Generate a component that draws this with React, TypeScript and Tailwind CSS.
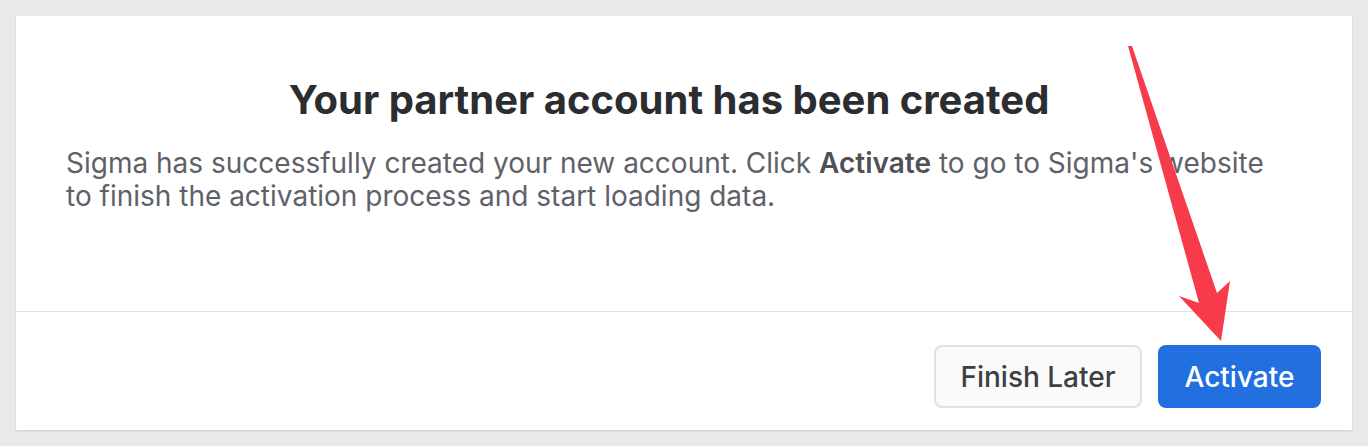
export default function App() {
  return (
    <div className="relative h-[446px] w-[1368px] bg-[#e9e9e9] p-4 font-['Inter',sans-serif]">
      <div className="flex h-[414px] flex-col bg-white shadow-[0_1px_2px_rgba(0,0,0,0.12)]">
        <div className="h-[296px] border-b border-[#e0e0e0] px-[50px] pt-[60px]">
          <h1 className="pr-[30px] text-center text-[40px] leading-[48px] font-bold text-[#2b2d31]">
            Your partner account has been created
          </h1>
          <p className="mt-[23px] pr-[36px] text-[28px] leading-[33px] text-[#5f6169]">
            Sigma has successfully created your new account. Click{' '}
            <span className="font-semibold text-[#4f5157]">Activate</span> to go to Sigma's website to finish the
            activation process and start loading data.
          </p>
        </div>
        <div className="flex flex-1 items-start justify-end gap-4 pt-[33px] pr-[31px]">
          <button className="h-[63px] w-[208px] rounded-lg border-2 border-[#e1e1e1] bg-[#fafafa] text-[28px] font-medium text-[#3c3f44]">
            Finish Later
          </button>
          <button className="h-[63px] w-[163px] rounded-lg bg-[#2270e0] text-[28px] font-medium text-white">
            Activate
          </button>
        </div>
      </div>
      <svg className="pointer-events-none absolute left-0 top-0" width="1368" height="446" viewBox="0 0 1368 446">
        <polygon
          points="1128,46 1132,46 1217,293 1230,281 1221,341 1179,296 1199,303"
          fill="#f73b4b"
        />
      </svg>
    </div>
  )
}
